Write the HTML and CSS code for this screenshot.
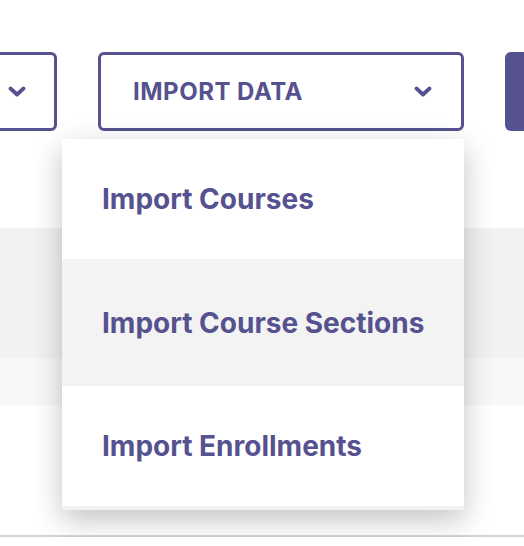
FILE: index.html
```html
<!DOCTYPE html>
<html lang="en">
<head>
<meta charset="utf-8">
<title>Import data</title>
<link rel="stylesheet" href="styles.css">
</head>
<body>
  <div class="toolbar">
    <button class="btn btn-outline btn-more" type="button" aria-label="More">
      <svg class="chev" width="18" height="11" viewBox="0 0 18 11"><polyline points="2.5,2.5 9,8.5 15.5,2.5"/></svg>
    </button>
    <div class="dropdown">
      <button class="btn btn-outline btn-import" type="button">
        <span>IMPORT DATA</span>
        <svg class="chev" width="18" height="11" viewBox="0 0 18 11"><polyline points="2.5,2.5 9,8.5 15.5,2.5"/></svg>
      </button>
      <ul class="menu">
        <li class="menu-item">Import Courses</li>
        <li class="menu-item is-active">Import Course Sections</li>
        <li class="menu-item">Import Enrollments</li>
      </ul>
    </div>
    <button class="btn btn-solid" type="button" aria-label="Add"></button>
  </div>
  <div class="table">
    <div class="table-head"></div>
    <div class="table-sub"></div>
    <div class="table-body"></div>
  </div>
</body>
</html>
```
FILE: styles.css
```css
* { box-sizing: border-box; }
html, body { margin: 0; padding: 0; background: #fff; overflow: hidden; }
body { font-family: Inter, "Noto Sans", sans-serif; color: #55528f; }

.toolbar {
  display: flex;
  gap: 41px;
  margin-top: 52px;
  margin-left: -143px;
  height: 79px;
}
.toolbar > * { flex-shrink: 0; }
.btn {
  height: 79px;
  border-radius: 6px;
  font-family: inherit;
  font-weight: 700;
  font-size: 24px;
  letter-spacing: 0.5px;
  padding: 0;
  cursor: pointer;
}
.btn-outline {
  border: 3px solid #55528f;
  background: #fff;
  color: #55528f;
}
.btn-more {
  width: 200px;
  display: flex;
  justify-content: flex-end;
  align-items: center;
  padding-right: 28px;
}
.chev { display: block; }
.chev polyline {
  fill: none;
  stroke: #55528f;
  stroke-width: 3.8;
  stroke-linecap: round;
  stroke-linejoin: round;
}
.dropdown { position: relative; }
.btn-import {
  width: 366px;
  display: flex;
  align-items: center;
  justify-content: space-between;
  padding: 0 29px 0 32px;
}
.btn-import span { line-height: 1; padding-top: 1px; }
.btn-solid {
  width: 120px;
  border: 0;
  background: #55528f;
  color: #fff;
}

.menu {
  position: absolute;
  top: 87px;
  right: 0;
  width: 402px;
  margin: 0;
  padding: 0;
  list-style: none;
  background: #fff;
  border-bottom: 4px solid #f2f2f2;
  box-shadow: 0 10px 28px rgba(0, 0, 0, 0.24);
  z-index: 5;
}
.menu-item {
  height: 120px;
  display: flex;
  align-items: center;
  padding: 0 40px;
  font-size: 28px;
  font-weight: 700;
  color: #55528f;
  letter-spacing: 0;
  white-space: nowrap;
}
.menu-item.is-active {
  height: 127px;
  background: #f3f3f3;
}

.table { margin-top: 97px; }
.table-head { height: 130px; background: #f2f2f2; }
.table-sub { height: 47px; background: #f8f8f8; }
.table-body { height: 132px; border-bottom: 2px solid #d3d3d3; }
```
